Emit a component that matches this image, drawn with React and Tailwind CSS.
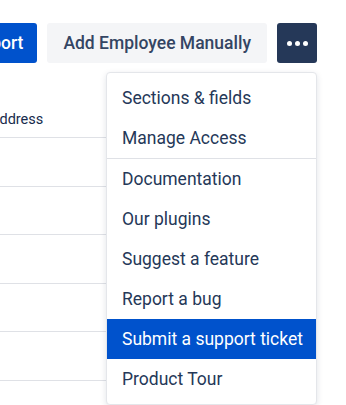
import React from "react";

const menuTop = ["Sections & fields", "Manage Access"];
const menuBottom = [
  "Documentation",
  "Our plugins",
  "Suggest a feature",
  "Report a bug",
  "Submit a support ticket",
  "Product Tour",
];

function MenuItem({ label, active }) {
  return (
    <div
      className={`flex h-10 items-center whitespace-nowrap px-[15px] text-[17.5px] ${
        active ? "bg-[#0052cc] text-white" : "text-[#253858]"
      }`}
    >
      {label}
    </div>
  );
}

function MoreMenu() {
  return (
    <div className="absolute right-0 top-[49px] z-10 w-[211px] rounded-[4px] border border-[#e4e6ea] bg-white py-[5px] shadow-[0_2px_6px_rgba(9,30,66,0.12)]">
      {menuTop.map((label) => (
        <MenuItem key={label} label={label} />
      ))}
      <div className="h-px bg-[#dfe1e6]" />
      {menuBottom.map((label) => (
        <MenuItem
          key={label}
          label={label}
          active={label === "Submit a support ticket"}
        />
      ))}
    </div>
  );
}

export default function App() {
  const rows = [0, 1, 2, 3, 4, 5];

  return (
    <div
      className="h-[405px] w-[346px] overflow-hidden bg-white"
      style={{ fontFamily: "Roboto, 'Liberation Sans', sans-serif" }}
    >
      {/* toolbar */}
      <div className="flex justify-end gap-[10px] pr-[29px] pt-[23px]">
        <button className="flex h-10 shrink-0 items-center rounded-[3px] bg-[#0052cc] pl-4 pr-[14px] text-[17.5px] font-medium text-white">
          Bulk Import
        </button>
        <button className="flex h-10 shrink-0 items-center rounded-[3px] bg-[#f4f5f7] px-4 text-[17.5px] font-medium text-[#344563]">
          Add Employee Manually
        </button>
        <div className="relative shrink-0">
          <button className="flex h-10 w-10 items-center justify-center gap-[3px] rounded-[3px] bg-[#253858]">
            <span className="h-[5px] w-[5px] rounded-full bg-white" />
            <span className="h-[5px] w-[5px] rounded-full bg-white" />
            <span className="h-[5px] w-[5px] rounded-full bg-white" />
          </button>
          <MoreMenu />
        </div>
      </div>

      {/* table behind the menu */}
      <div className="ml-[-10px] mt-[26px] w-[300px]">
        <div className="flex h-[49px] items-end border-b border-[#dfe1e6] pb-[6px] text-[14.5px] text-[#172b4d]">
          Address
        </div>
        {rows.map((r) => (
          <div
            key={r}
            className="flex h-[48.5px] items-start border-b border-[#dfe1e6]"
          >
            {r === 5 && (
              <div className="ml-[250px] mt-[22px] h-[6px] w-[9px] rounded-[2px] bg-[#253858]" />
            )}
          </div>
        ))}
      </div>
    </div>
  );
}
